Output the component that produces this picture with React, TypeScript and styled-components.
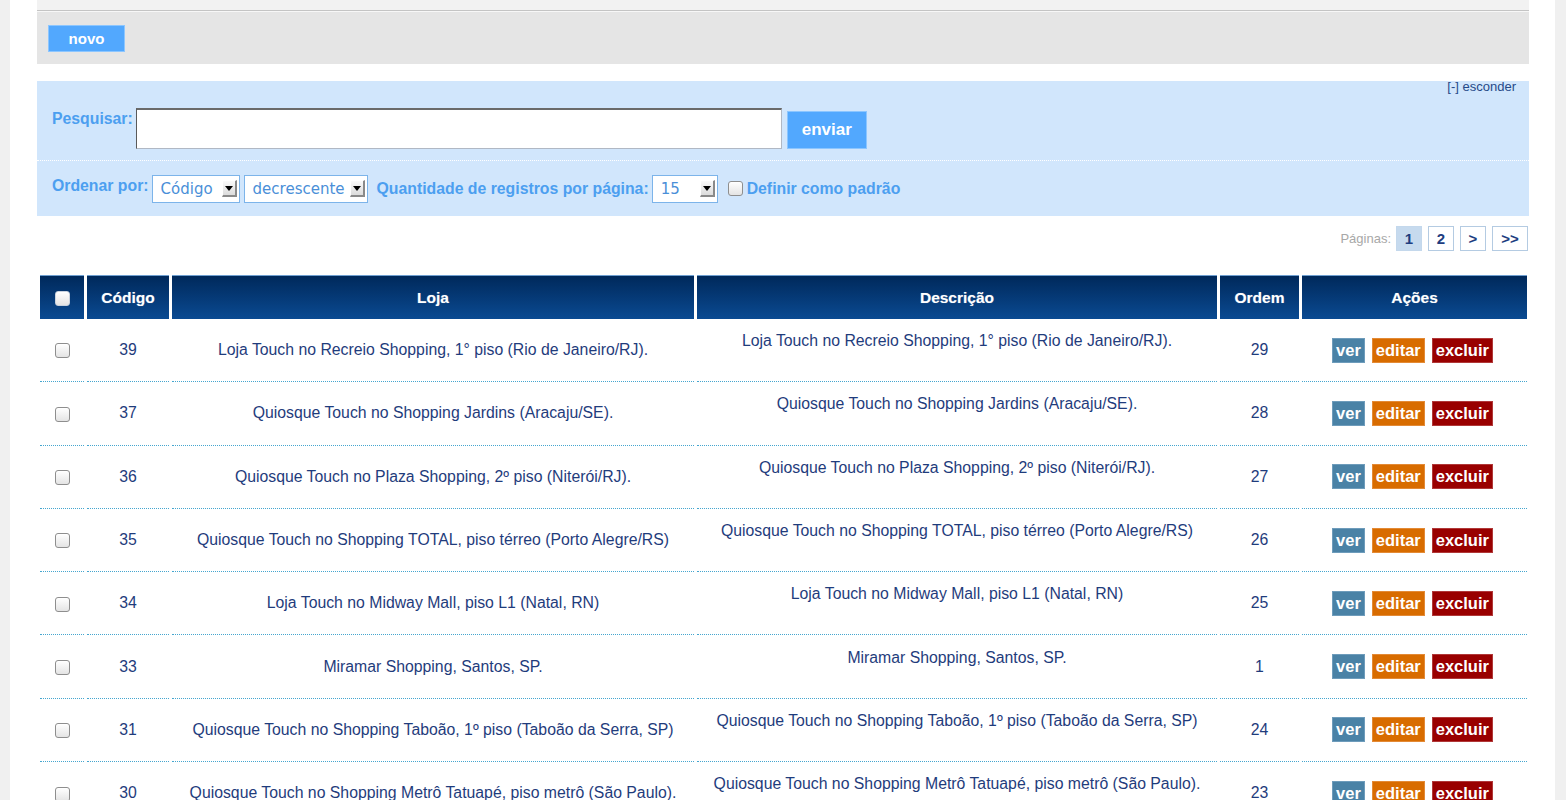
import React from "react";
import styled, { createGlobalStyle } from "styled-components";

const Global = createGlobalStyle`
  html, body { margin: 0; padding: 0; }
  body {
    background: #f0f0f0;
    font-family: "Liberation Sans", Arial, sans-serif;
    color: #1f3c7c;
  }
`;

const Page = styled.div`
  margin-left: 10px;
  width: 1545px;
  min-height: 800px;
  background: #ffffff;
  box-sizing: border-box;
  padding: 0 26px 0 27px;
`;

const TopStrip = styled.div`
  height: 10px;
  background: #f2f2f2;
  border-bottom: 1px solid #c4c4c4;
  box-shadow: 0 1px 0 #f7f7f7;
`;

const Toolbar = styled.div`
  margin-top: 1px;
  height: 52px;
  background: #e5e5e5;
  display: flex;
  align-items: center;
  padding-left: 11px;
`;

const BlueButton = styled.button<{ $w: number; $h: number; $fs: number }>`
  width: ${(p) => p.$w}px;
  height: ${(p) => p.$h}px;
  background: #52a8fe;
  border: 1px solid #8cc6ff;
  color: #ffffff;
  font-family: "Liberation Sans", Arial, sans-serif;
  font-weight: bold;
  font-size: ${(p) => p.$fs}px;
  padding: 0;
  cursor: pointer;
`;

const SearchPanel = styled.div`
  margin-top: 17px;
  background: #d1e6fc;
  height: 135px;
  display: flex;
  flex-direction: column;
`;

const HideRow = styled.div`
  display: flex;
  justify-content: flex-end;
  padding: 0 13px 0 0;
  height: 14px;
  line-height: 12px;
  font-size: 13px;
  color: #264a88;
`;

const SearchRow = styled.div`
  display: flex;
  align-items: flex-start;
  padding: 13px 0 0 15px;
  height: 52px;
  border-bottom: 1px dotted #ffffff;
`;

const Label = styled.span<{ $mt?: number }>`
  font-size: 15.8px;
  font-weight: bold;
  color: #4c9ff0;
  margin-top: ${(p) => p.$mt ?? 0}px;
  white-space: nowrap;
`;

const SearchInput = styled.input`
  width: 646px;
  height: 41px;
  box-sizing: border-box;
  margin-left: 3px;
  border: 1px solid #b0b8c4;
  border-top: 2px solid #6a6a6a;
  border-left: 1px solid #5a5a5a;
  background: #ffffff;
  outline: none;
`;

const SendWrap = styled.div`
  margin: 3px 0 0 5px;
`;

const OptionsRow = styled.div`
  display: flex;
  align-items: center;
  padding: 0 0 0 15px;
  flex: 1;
`;

const Spacer = styled.span<{ $w: number }>`
  width: ${(p) => p.$w}px;
  flex: none;
`;

const FakeSelect = styled.div<{ $w: number }>`
  width: ${(p) => p.$w}px;
  height: 28px;
  box-sizing: border-box;
  background: #ffffff;
  border: 1px solid #7cb4ea;
  display: flex;
  align-items: center;
  justify-content: space-between;
  padding: 0 2px 0 8px;
  font-family: "DejaVu Sans", sans-serif;
  font-size: 15px;
  color: #4a8fd8;
`;

const Arrow = styled.span`
  width: 15px;
  height: 17px;
  box-sizing: border-box;
  background: linear-gradient(#fafafa, #dcdcdc);
  border-right: 2px solid #8a8a8a;
  border-bottom: 2px solid #8a8a8a;
  border-top: 1px solid #ffffff;
  border-left: 1px solid #ffffff;
  display: flex;
  align-items: center;
  justify-content: center;
  &::after {
    content: "";
    border-left: 4px solid transparent;
    border-right: 4px solid transparent;
    border-top: 5px solid #000;
  }
`;

const Check = styled.input.attrs({ type: "checkbox" })<{ $dark?: boolean }>`
  appearance: none;
  -webkit-appearance: none;
  width: 15px;
  height: 15px;
  margin: 0;
  box-sizing: border-box;
  border: 1px solid ${(p) => (p.$dark ? "#c9d2de" : "#8e8e8e")};
  border-radius: 3px;
  background: linear-gradient(#ffffff, #e4e4e4);
  box-shadow: inset 0 1px 0 #ffffff;
  vertical-align: middle;
`;

const Pager = styled.div`
  display: flex;
  justify-content: flex-end;
  align-items: center;
  gap: 6px;
  margin-top: 10px;
  padding-right: 1px;
`;

const PagerLabel = styled.span`
  font-size: 13px;
  color: #a8a8a8;
  margin-right: -1px;
`;

const PageBox = styled.span<{ $active?: boolean; $w?: number }>`
  width: ${(p) => p.$w ?? 26}px;
  height: 25px;
  box-sizing: border-box;
  border: 1px solid ${(p) => (p.$active ? "#c4d8ec" : "#b4cbe2")};
  background: ${(p) => (p.$active ? "#c6daee" : "#ffffff")};
  display: flex;
  align-items: center;
  justify-content: center;
  font-size: 15px;
  font-weight: bold;
  color: #1d3d80;
`;

const Table = styled.table`
  margin-top: 24px;
  width: 100%;
  border-collapse: separate;
  border-spacing: 3px 0;
  table-layout: fixed;
`;

const Th = styled.th<{ $w: number }>`
  width: ${(p) => p.$w}px;
  height: 43px;
  padding: 0;
  background: linear-gradient(#00295b, #0a4a92);
  color: #ffffff;
  font-size: 15.5px;
  font-weight: bold;
  text-align: center;
  text-shadow: 0 0 1px rgba(255, 255, 255, 0.4);
  border-top: 1px solid #6f9fd0;
`;

const Td = styled.td<{ $pb?: number }>`
  height: 63.3px;
  box-sizing: border-box;
  padding: 0 0 ${(p) => p.$pb ?? 0}px;
  border-bottom: 1px dotted #45a6cf;
  text-align: center;
  vertical-align: middle;
  font-size: 15.8px;
  color: #1f3c7c;
`;

const Actions = styled.div`
  display: flex;
  justify-content: center;
  gap: 7px;
  padding-right: 4px;
`;

const ActionBtn = styled.span<{ $bg: string; $bd: string }>`
  height: 25px;
  box-sizing: border-box;
  padding: 0 3px;
  display: flex;
  align-items: center;
  background: ${(p) => p.$bg};
  border: 1px solid ${(p) => p.$bd};
  color: #ffffff;
  font-size: 16.5px;
  font-weight: bold;
`;

const rows = [
  { c: 39, l: "Loja Touch no Recreio Shopping, 1° piso (Rio de Janeiro/RJ).", d: "Loja Touch no Recreio Shopping, 1° piso (Rio de Janeiro/RJ).", o: 29 },
  { c: 37, l: "Quiosque Touch no Shopping Jardins (Aracaju/SE).", d: "Quiosque Touch no Shopping Jardins (Aracaju/SE).", o: 28 },
  { c: 36, l: "Quiosque Touch no Plaza Shopping, 2º piso (Niterói/RJ).", d: "Quiosque Touch no Plaza Shopping, 2º piso (Niterói/RJ).", o: 27 },
  { c: 35, l: "Quiosque Touch no Shopping TOTAL, piso térreo (Porto Alegre/RS)", d: "Quiosque Touch no Shopping TOTAL, piso térreo (Porto Alegre/RS)", o: 26 },
  { c: 34, l: "Loja Touch no Midway Mall, piso L1 (Natal, RN)", d: "Loja Touch no Midway Mall, piso L1 (Natal, RN)", o: 25 },
  { c: 33, l: "Miramar Shopping, Santos, SP.", d: "Miramar Shopping, Santos, SP.", o: 1 },
  { c: 31, l: "Quiosque Touch no Shopping Taboão, 1º piso (Taboão da Serra, SP)", d: "Quiosque Touch no Shopping Taboão, 1º piso (Taboão da Serra, SP)", o: 24 },
  { c: 30, l: "Quiosque Touch no Shopping Metrô Tatuapé, piso metrô (São Paulo).", d: "Quiosque Touch no Shopping Metrô Tatuapé, piso metrô (São Paulo).", o: 23 },
];

export default function App() {
  return (
    <>
      <Global />
      <Page>
        <TopStrip />
        <Toolbar>
          <BlueButton $w={77} $h={27} $fs={15}>novo</BlueButton>
        </Toolbar>
        <SearchPanel>
          <HideRow>[-] esconder</HideRow>
          <SearchRow>
            <Label $mt={2}>Pesquisar:</Label>
            <SearchInput />
            <SendWrap>
              <BlueButton $w={80} $h={38} $fs={17}>enviar</BlueButton>
            </SendWrap>
          </SearchRow>
          <OptionsRow>
            <Label $mt={-5}>Ordenar por:</Label>
            <Spacer $w={3} />
            <FakeSelect $w={88}>Código<Arrow /></FakeSelect>
            <Spacer $w={4} />
            <FakeSelect $w={124}>decrescente<Arrow /></FakeSelect>
            <Spacer $w={9} />
            <Label>Quantidade de registros por página:</Label>
            <Spacer $w={3} />
            <FakeSelect $w={66}>15<Arrow /></FakeSelect>
            <Spacer $w={10} />
            <Check />
            <Spacer $w={4} />
            <Label>Definir como padrão</Label>
          </OptionsRow>
        </SearchPanel>
        <Pager>
          <PagerLabel>Páginas:</PagerLabel>
          <PageBox $active>1</PageBox>
          <PageBox>2</PageBox>
          <PageBox>&gt;</PageBox>
          <PageBox $w={36}>&gt;&gt;</PageBox>
        </Pager>
        <Table>
          <thead>
            <tr>
              <Th $w={44}><Check $dark /></Th>
              <Th $w={82}>Código</Th>
              <Th $w={522}>Loja</Th>
              <Th $w={520}>Descrição</Th>
              <Th $w={79}>Ordem</Th>
              <Th $w={225}>Ações</Th>
            </tr>
          </thead>
          <tbody>
            {rows.map((r) => (
              <tr key={r.c}>
                <Td><Check /></Td>
                <Td>{r.c}</Td>
                <Td>{r.l}</Td>
                <Td $pb={18}>{r.d}</Td>
                <Td>{r.o}</Td>
                <Td>
                  <Actions>
                    <ActionBtn $bg="#4a82a6" $bd="#6e9cbb">ver</ActionBtn>
                    <ActionBtn $bg="#d86c00" $bd="#e38a36">editar</ActionBtn>
                    <ActionBtn $bg="#990000" $bd="#b03838">excluir</ActionBtn>
                  </Actions>
                </Td>
              </tr>
            ))}
          </tbody>
        </Table>
      </Page>
    </>
  );
}
